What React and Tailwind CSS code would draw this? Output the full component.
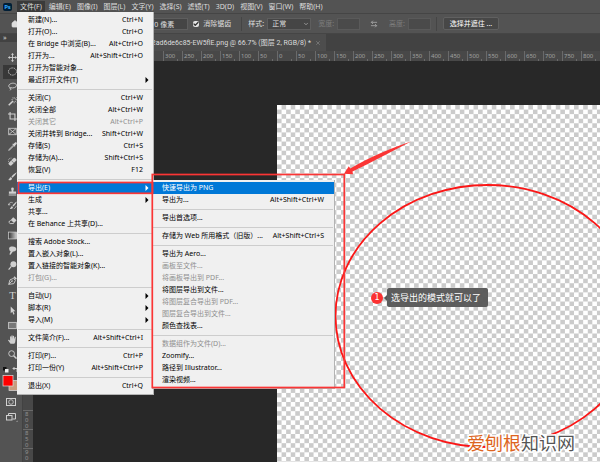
import React from 'react';
import { ArrowLeftRight, Check, ChevronDown, Home, X } from 'lucide-react';

const MENUS = ['文件(F)', '编辑(E)', '图像(I)', '图层(L)', '文字(Y)', '选择(S)', '滤镜(T)', '3D(D)', '视图(V)', '窗口(W)', '帮助(H)'];

// null marks a separator
const FILE_MENU = [
  { label: '新建(N)...', keys: 'Ctrl+N' },
  { label: '打开(O)...', keys: 'Ctrl+O' },
  { label: '在 Bridge 中浏览(B)...', keys: 'Alt+Ctrl+O' },
  { label: '打开为...', keys: 'Alt+Shift+Ctrl+O' },
  { label: '打开为智能对象...' },
  { label: '最近打开文件(T)', more: true },
  null,
  { label: '关闭(C)', keys: 'Ctrl+W' },
  { label: '关闭全部', keys: 'Alt+Ctrl+W' },
  { label: '关闭其它', keys: 'Alt+Ctrl+P', disabled: true },
  { label: '关闭并转到 Bridge...', keys: 'Shift+Ctrl+W' },
  { label: '存储(S)', keys: 'Ctrl+S' },
  { label: '存储为(A)...', keys: 'Shift+Ctrl+S' },
  { label: '恢复(V)', keys: 'F12' },
  null,
  { label: '导出(E)', more: true, active: true, submenu: true },
  { label: '生成', more: true },
  { label: '共享...' },
  { label: '在 Behance 上共享(D)...' },
  null,
  { label: '搜索 Adobe Stock...' },
  { label: '置入嵌入对象(L)...' },
  { label: '置入链接的智能对象(K)...' },
  { label: '打包(G)...', disabled: true },
  null,
  { label: '自动(U)', more: true },
  { label: '脚本(R)', more: true },
  { label: '导入(M)', more: true },
  null,
  { label: '文件简介(F)...', keys: 'Alt+Shift+Ctrl+I' },
  null,
  { label: '打印(P)...', keys: 'Ctrl+P' },
  { label: '打印一份(Y)', keys: 'Alt+Shift+Ctrl+P' },
  null,
  { label: '退出(X)', keys: 'Ctrl+Q' },
];

const EXPORT_MENU = [
  { label: '快速导出为 PNG', active: true },
  { label: '导出为...', keys: 'Alt+Shift+Ctrl+W' },
  null,
  { label: '导出首选项...' },
  null,
  { label: '存储为 Web 所用格式（旧版）...', keys: 'Alt+Shift+Ctrl+S' },
  null,
  { label: '导出为 Aero...' },
  { label: '画板至文件...', disabled: true },
  { label: '将画板导出到 PDF...', disabled: true },
  { label: '将图层导出到文件...' },
  { label: '将图层复合导出到 PDF...', disabled: true },
  { label: '图层复合导出到文件...', disabled: true },
  { label: '颜色查找表...' },
  null,
  { label: '数据组作为文件(D)...', disabled: true },
  { label: 'Zoomify...' },
  { label: '路径到 Illustrator...' },
  { label: '渲染视频...' },
];

const line = { fill: 'none', stroke: 'currentColor', strokeWidth: 1 };

const TOOLS = [
  { name: '移动', art: <><path d="M5 .8v8.4M.8 5h8.4" {...line} /><path d="M5 0l1.7 2H3.3zM5 10l1.7-2H3.3zM0 5l2-1.7v3.4zM10 5L8 3.3v3.4z" /></> },
  { name: '椭圆选框', active: true, art: <ellipse cx="5" cy="5" rx="4.5" ry="4" {...line} strokeDasharray="1.6 1" /> },
  { name: '套索', art: <path d="M2 6.3C.2 5.400.5 3 2.700 2 5.300.6 9.500 1.500 9.500 3.800 9.500 6 5.500 7.200 3 6.300 1.600 5.800 1.500 7.600 2.800 7.400 3.800 7.200 3.500 8.500 2 9.300" {...line} /> },
  { name: '魔棒', art: <><path d="M.8 9.200L5.600 4.400" {...line} strokeWidth="1.700" /><path d="M6.800 0v2M6.800 5v2M3.800 3h1.500M8.200 3H10M4.800.8l1 1M8 4.600l1.300 1.300M8.200 1.800L9.500.5" {...line} strokeWidth=".8" /></> },
  { name: '裁剪', art: <path d="M2.300 0v7.700H10M0 2.300h7.700V10" {...line} strokeWidth="1.200" /> },
  { name: '图框', art: <path d="M.7 1.500h8.600v7H.7zM.7 1.500l8.600 7M9.300 1.500l-8.600 7" {...line} strokeWidth=".9" /> },
  { name: '吸管', art: <><path d="M6 3.500L1.500 8 .8 9.300 2 8.600 6.600 4.100" {...line} /><path d="M4.800 2.600l2.700 2.700.7-.8-.4-.5L9.600 2.200C10.300 1 9 -.2 7.800.5L6 2.200l-.5-.4z" /></> },
  { name: '修复画笔', art: <><rect x="-1" y="3" width="10" height="4.200" rx="1.500" transform="rotate(-45 4 5) translate(.5 .8)" /><path d="M3.700 3.900l2.700 2.700" stroke="#535353" strokeWidth=".7" /><path d="M.5 5.500C-.2 3 1.500 1 3.800 1.200" {...line} strokeDasharray="1 .8" strokeWidth=".8" /></> },
  { name: '画笔', art: <><path d="M9.700.4C7.500 1.500 4.800 3.800 3.800 5.300l1.100 1.100C6.600 5.200 9 2.500 9.700.4z" /><path d="M3.300 5.800C1.700 5.600 2 8 .2 8.500c1.500 1.200 4.300.7 4.200-1.600z" /></> },
  { name: '仿制图章', art: <path d="M3.500 2a1.500 1.500 0 013 0c0 1.300-.7 1.600-.5 3h3v2.500H1V5h3c.2-1.400-.5-1.700-.5-3zM.8 8.300h8.400v1.200H.8z" /> },
  { name: '历史记录画笔', art: <><path d="M9.800.5C8 1.500 6 3.600 5 5.200l1 1C7.600 4.800 9.300 2.500 9.800.5zM4.500 5.700C3 5.700 3.400 7.700 2 8.500c1.300.8 3.700.2 3.500-1.800z" /><path d="M.8 4.300C1 2 3.500.8 5.300 2M0 2.800l.8 1.800 1.800-.8M6.500 8.500C8 8 9 7 9 5.300" {...line} strokeWidth=".8" /></> },
  { name: '橡皮擦', art: <><path d="M5.800 1.500L9.500 4.800 6.700 7.800 3 4.500z" /><path d="M3 4.500L.8 6.900l1.600 1.500h3.700l.6-.6" {...line} /></> },
  { name: '渐变', art: <><defs><linearGradient id="grad"><stop stopColor="#333" /><stop offset="1" stopColor="#ccc" /></linearGradient></defs><rect x=".5" y="1.200" width="9" height="7.600" fill="url(#grad)" stroke="currentColor" strokeWidth=".8" /></> },
  { name: '涂抹', art: <path d="M1.300 3C.8 1 3.800.2 5.300.6c2.500.2 4.200 1.500 3.900 3.200-.3 1.800-2 2-3.700 2.400L3 9.500c-.7.7-1.500 0-1.200-.8L3 5.800C1.500 5.500 1.500 4 1.300 3z" /> },
  { name: '减淡', art: <><circle cx="6" cy="3.700" r="3.300" /><path d="M3.700 6L.7 9.500" {...line} strokeWidth="1.300" /></> },
  { name: '钢笔', art: <><path d="M.8 9.300L2.200 4.300 6 2.700l2.200 2.200L6.500 8.500zM.8 9.300l3.500-3.600" {...line} /><path d="M6 1.700L7.300.4l2.400 2.400L8.500 4.200z" /><circle cx="4.600" cy="5.500" r=".9" /></> },
  { name: '横排文字', art: <text x="5" y="9" textAnchor="middle" fontSize="12" className="font-['Liberation_Serif',serif]">T</text> },
  { name: '路径选择', art: <path d="M3 .5l5.200 5.300H6L7.300 9l-1.200.6L4.800 6.400 3 8z" /> },
  { name: '矩形', art: <rect x=".7" y="1.500" width="8.600" height="7" fill="#777" stroke="currentColor" strokeWidth=".9" /> },
  { name: '抓手', art: <path d="M2.800 9.700L.2 6.200c-.4-.8.6-1.300 1.200-.6l.9.8V2c0-.9 1.200-.9 1.300 0l.2 2.500V1c0-.9 1.300-.9 1.400 0v3.400l.4-2.900c.1-.8 1.300-.7 1.200.2v3l.8-2.200c.3-.8 1.300-.4 1.100.4L8 8l-1 1.700z" /> },
  { name: '缩放', art: <><circle cx="4" cy="4" r="3.200" {...line} /><path d="M6.300 6.300l3.200 3.200" {...line} strokeWidth="1.700" /></> },
];

const H_RULER = [300, 250, 200, 150, 100, 50, 0, 50, 100, 150, 200, 250, 300, 350, 400, 450, 500, 550, 600, 650, 700, 750, 800];
const V_RULER = [800, 850, 900];

const MenuItem = ({ item, inset, children }) => (
  <li role="none" className="relative">
    <button
      type="button"
      role="menuitem"
      disabled={item.disabled}
      className={`flex h-3 w-full items-center justify-between whitespace-nowrap ${inset}
        ${item.active ? 'bg-[#0078d7] text-white' : item.disabled ? 'text-[#8f8f8f]' : 'text-black'}`}
    >
      <span>{item.label}</span>
      {item.keys && <span>{item.keys}</span>}
    </button>
    {item.more && (
      <svg viewBox="0 0 4 6" className={`absolute right-1 top-[3px] h-1.5 w-1 ${item.active ? 'fill-white' : 'fill-black'}`}>
        <path d="M.5 0L3.500 3 .5 6z" />
      </svg>
    )}
    {children}
  </li>
);

const MenuList = ({ items, inset, label, className }) => (
  <ul role="menu" aria-label={label} className={`absolute border-r border-b border-[#b4b4b4] bg-[#f0f0f0] ${className}`}>
    {items.map((item, i) =>
      item ? (
        <MenuItem key={i} item={item} inset={inset}>
          {item.submenu && (
            <MenuList items={EXPORT_MENU} inset="px-2.5" label="导出" className="-top-0.5 left-[135px] w-[183px] py-0.5" />
          )}
        </MenuItem>
      ) : (
        <li key={i} role="separator" className="mx-px flex h-1.5 items-center">
          <span className="h-px w-full bg-[#cdcdcd]" />
        </li>
      )
    )}
  </ul>
);

const MenuBar = () => (
  <nav className="relative z-20 flex h-[13px] shrink-0 items-center bg-[#535353] text-[#dedede]">
    <span className="ml-[3px] mr-[5px] flex h-2 w-[9px] items-center justify-center rounded-xs bg-[#001e36] text-[6px] font-bold text-[#31a8ff]">Ps</span>
    {MENUS.map((menu, i) => (
      <button
        key={menu}
        type="button"
        className={`h-[11px] whitespace-nowrap ${i === 0 ? 'bg-[#3a3a3a] px-[3px]' : 'ml-1 pr-[2px]'}`}
      >
        {menu}
      </button>
    ))}
    <MenuList items={FILE_MENU} inset="pl-[11px] pr-2.5" label="文件" className="left-[17px] top-3 w-[137px] py-0.5" />
  </nav>
);

const OptionsBar = () => (
  <div className="flex h-[21px] shrink-0 items-center border-y border-[#454545] bg-[#535353] text-[#dedede]">
    <Home className="ml-[11px] size-2 shrink-0 fill-current" />
    <label className="ml-auto flex items-center">
      <span className="sr-only">羽化</span>
      <input defaultValue="0 像素" className="h-3 w-[36px] border border-[#5e5e5e] bg-[#454545] pl-px" />
    </label>
    <label className="ml-[5px] flex items-center gap-1 whitespace-nowrap">
      <span className="relative flex size-1.5">
        <input type="checkbox" defaultChecked className="size-1.5 appearance-none rounded-xs bg-[#e6e6e6]" />
        <Check strokeWidth={5} className="pointer-events-none absolute inset-0 size-1.5 text-[#333]" />
      </span>
      消除锯齿
    </label>
    <span className="ml-[10px] h-3.5 w-px bg-[#454545]" />
    <label className="ml-[6px] flex items-center gap-[3px] whitespace-nowrap">
      样式:
      <span className="relative flex">
        <select className="h-3 w-[44px] appearance-none border border-[#5e5e5e] bg-[#454545] pl-1">
          <option>正常</option>
        </select>
        <ChevronDown className="pointer-events-none absolute right-0.5 top-[3px] size-1.5" />
      </span>
    </label>
    <label className="ml-[7px] flex items-center gap-[3px] whitespace-nowrap text-[#7d7d7d]">
      宽度:
      <input disabled className="h-3 w-[23px] border border-[#5a5a5a] bg-[#4a4a4a]" />
    </label>
    <button type="button" aria-label="互换" className="ml-2.5 text-[#9a9a9a]">
      <ArrowLeftRight strokeWidth={3} className="size-2" />
    </button>
    <label className="ml-[11px] flex items-center gap-[3px] whitespace-nowrap text-[#7d7d7d]">
      高度:
      <input disabled className="h-3 w-[23px] border border-[#5a5a5a] bg-[#4a4a4a]" />
    </label>
    <span className="ml-[5px] h-3.5 w-px bg-[#454545]" />
    <button type="button" className="ml-1.5 mr-[101px] h-[13px] w-[56px] whitespace-nowrap rounded-xs border border-[#606060] bg-[#474747] text-white">
      选择并遮住 ...
    </button>
  </div>
);

const Toolbar = () => (
  <aside className="flex w-[22px] shrink-0 flex-col bg-[#535353] text-[#d0d0d0]">
    <div className="h-2 bg-[#424242] pl-[3px] text-[7px] leading-[7px]">»</div>
    <div className="mt-2 flex h-[312px] flex-col justify-between">
      {TOOLS.map((tool) => (
        <button
          key={tool.name}
          type="button"
          aria-label={tool.name}
          className={`ml-[3px] flex h-3.5 w-[18px] items-center justify-center ${tool.active ? 'bg-[#383838]' : ''}`}
        >
          <svg viewBox="0 0 10 10" className="size-[9px] fill-current">{tool.art}</svg>
        </button>
      ))}
    </div>
    <svg viewBox="0 0 22 58" className="mt-1 h-[58px] w-[22px]">
      <path d="M3 1h3.500v3.500H3z" fill="#111" />
      <path d="M5 3h3.500v3.500H5z" fill="#eee" />
      <path d="M14.500 1L13 2.500 14.500 4M13 2.500h4V6" {...line} />
      <rect x="9" y="14.500" width="10" height="10" fill="#c69c7e" stroke="#ddd" strokeWidth=".7" />
      <rect x="3" y="9.500" width="10" height="10.500" fill="#f00" stroke="#ddd" strokeWidth=".7" />
      <rect x="6.500" y="32.500" width="9" height="7" {...line} />
      <circle cx="11" cy="36" r="2.300" {...line} strokeWidth=".8" />
      <path d="M8.500 49.500V47.500H15.500v5.500h-3" {...line} />
      <rect x="6.500" y="49.500" width="5.500" height="4.500" {...line} />
      <path d="M17.500 54.500v1.300h-1.300z" fill="currentColor" />
    </svg>
  </aside>
);

const HorizontalRuler = () => (
  <div className="flex h-2.5 shrink-0 overflow-hidden bg-[#484848] pl-[141px] text-[#a0a0a0]">
    {H_RULER.map((n, i) => (
      <span key={i} className="relative w-[19px] shrink-0 border-l border-[#6a6a6a] pl-px text-[6px] leading-[10px]">
        {n}
        <i className="absolute bottom-0 right-1 h-0.5 w-px bg-[#6a6a6a]" />
      </span>
    ))}
  </div>
);

const VerticalRuler = () => (
  <div className="ml-px flex w-2.5 shrink-0 flex-col overflow-hidden bg-[#484848] pt-[349px] text-[#909090]">
    {V_RULER.map((n) => (
      <span key={n} className="h-[19px] w-full shrink-0 border-t border-[#6a6a6a] pl-0.5 text-[6px] leading-[6px]">
        {String(n).split('').map((digit, d) => (
          <b key={d} className="block font-normal">{digit}</b>
        ))}
      </span>
    ))}
  </div>
);

const Artboard = () => (
  <main className="relative min-w-0 flex-1 overflow-hidden bg-[#282828]">
    <svg className="absolute inset-0 h-full w-full">
      <defs>
        <pattern id="checker" x="244" y="44" width="9.140" height="9.140" patternUnits="userSpaceOnUse">
          <rect width="9.140" height="9.140" fill="#fff" />
          <path d="M4.570 0h4.570v4.570H4.570zM0 4.570h4.570v4.570H0z" fill="#cbcbcb" />
        </pattern>
      </defs>
      <rect x="244" y="44" width="100%" height="100%" fill="url(#checker)" />
      <ellipse cx="454.500" cy="255" rx="152" ry="131" fill="none" stroke="#fb1616" strokeWidth="1.800" />
    </svg>
  </main>
);

const Annotations = () => (
  <div className="pointer-events-none absolute inset-0 z-30">
    <svg className="absolute inset-0 h-full w-full overflow-visible" fill="none" stroke="#fb3535" strokeWidth="1.700">
      <rect x="18.500" y="182.500" width="134" height="10.800" />
      <rect x="152.300" y="174.500" width="192" height="213" />
      <path d="M344 173.800l4.800-7.600 1.500 2.200C370 157 392 148 411 141.500 393 151 373 161.500 352.500 171.500l.5 2.700z" fill="#fb3535" stroke="none" />
    </svg>
    <div className="absolute left-[371px] top-[288px] flex items-center gap-1">
      <span className="flex size-3 items-center justify-center rounded-full bg-[#fb3030] font-['DejaVu_Sans',sans-serif] text-[8px] leading-none text-white">1</span>
      <span className="relative flex h-[19px] items-center whitespace-nowrap rounded-xs bg-[#555]/95 pl-1 pr-[7px] text-[9px] text-white">
        <svg viewBox="0 0 3 6" className="absolute -left-[3px] h-1.5 w-[3px] fill-[#555]"><path d="M3 0v6L0 3z" /></svg>
        选导出的模式就可以了
      </span>
    </div>
    <p className="absolute bottom-[7px] right-[25px] whitespace-nowrap text-[18px] leading-6 text-[#555] [paint-order:stroke_fill] [-webkit-text-stroke:3px_#fff]">
      <span className="text-[#dd6420]">爱刨根</span>知识网
    </p>
  </div>
);

export default function App() {
  return (
    <div className="relative flex h-screen flex-col overflow-hidden bg-[#424242] font-['Noto_Sans','Noto_Sans_CJK_SC',sans-serif] text-[7px] leading-[10px]">
      <MenuBar />
      <OptionsBar />
      <div className="flex min-h-0 flex-1">
        <Toolbar />
        <div className="flex min-w-0 flex-1 flex-col">
          <div className="flex h-[17px] shrink-0 bg-[#424242]">
            <div className="flex w-[304px] items-center justify-end gap-1 whitespace-nowrap bg-[#4d4d4d] pr-[5px] font-['Roboto','Noto_Sans_CJK_SC',sans-serif] text-[#dcdcdc]">
              f2ad6de6c85-EW5flE.png @ 66.7% (图层 2, RGB/8) *
              <button type="button" aria-label="关闭" className="text-[#999]"><X className="size-1.5" /></button>
            </div>
          </div>
          <HorizontalRuler />
          <div className="flex min-h-0 flex-1">
            <VerticalRuler />
            <Artboard />
          </div>
        </div>
      </div>
      <Annotations />
    </div>
  );
}
